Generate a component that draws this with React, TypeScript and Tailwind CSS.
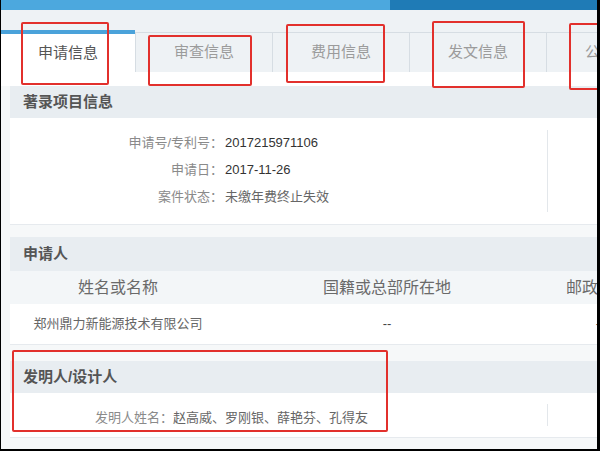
const font = "font-['Liberation_Sans','Noto_Sans_CJK_SC',sans-serif]";

const tabs = ['申请信息', '审查信息', '费用信息', '发文信息', '公布公告'];

const bibRows = [
  { label: '申请号/专利号：', value: '2017215971106', mono: true },
  { label: '申请日：', value: '2017-11-26', mono: true },
  { label: '案件状态：', value: '未缴年费终止失效', mono: false },
];

// red annotation boxes drawn over the screenshot
const marks = [
  'left-[20px] top-[22px] w-[88px] h-[63px]',
  'left-[147px] top-[35px] w-[104px] h-[51px]',
  'left-[285px] top-[24px] w-[99px] h-[59px]',
  'left-[431px] top-[21px] w-[93px] h-[67px]',
  'left-[568px] top-[23px] w-[60px] h-[67px]',
  'left-[11px] top-[350px] w-[376px] h-[82px]',
];

function SectionHeader({ title, h }: { title: string; h: string }) {
  return (
    <div className={`${h} flex items-center pl-[13px] bg-[#e8edf1] text-[15px] font-bold text-[#555]`}>
      {title}
    </div>
  );
}

export default function App() {
  return (
    <div className={`relative w-[600px] h-[451px] overflow-hidden bg-[#f6f8f9] border-l border-r-[3px] border-b-2 border-black ${font}`}>
      {/* top bar */}
      <div className="flex h-[10px]">
        <div className="w-[389px] bg-[#4ca8de]" />
        <div className="flex-1 bg-[#1f7bb6]" />
      </div>
      <div className="h-[20px] bg-[#eef2f5]" />

      {/* tabs */}
      <div className="flex h-[42px] bg-[#eef2f5] w-[700px]">
        {tabs.map((t, i) =>
          i === 0 ? (
            <div
              key={t}
              className="w-[134px] shrink-0 bg-white border-t-[4px] border-[#4aa2da] flex items-center justify-center text-[15px] text-[#555]"
            >
              {t}
            </div>
          ) : (
            <div
              key={t}
              className="w-[137px] shrink-0 mt-[2px] bg-[#eef2f5] border-t border-l border-[#d6dde3] flex items-center justify-center text-[15px] text-[#9b9b9b]"
            >
              {t}
            </div>
          )
        )}
      </div>
      <div className="h-[14px] bg-white" />

      {/* 著录项目信息 */}
      <div className="ml-[9px] w-[620px]">
        <SectionHeader title="著录项目信息" h="h-[32px]" />
        <div className="h-[107px] bg-white border-b border-[#e6eaee] flex">
          <div className="w-[537px] shrink-0 pt-[11px] text-[13px]">
            {bibRows.map((r) => (
              <div key={r.label} className="h-[27px] flex items-center">
                <span className="w-[213px] text-right text-[#8a8a8a]">{r.label}</span>
                <span className={r.mono ? 'pl-[2px] text-[#333]' : 'pl-[2px] text-[#666]'}>{r.value}</span>
              </div>
            ))}
          </div>
          <div className="my-[12px] border-l border-[#e3e7eb]" />
        </div>
      </div>

      <div className="h-[12px]" />

      {/* 申请人 */}
      <div className="ml-[9px] w-[620px]">
        <SectionHeader title="申请人" h="h-[34px]" />
        <div className="h-[33px] flex items-center bg-[#f3f6f8] text-[16px] text-[#6a6a6a] whitespace-nowrap">
          <div className="w-[216px] shrink-0 text-center">姓名或名称</div>
          <div className="w-[322px] shrink-0 text-center">国籍或总部所在地</div>
          <div className="w-[100px] shrink-0 text-center">邮政编码</div>
        </div>
        <div className="h-[41px] flex items-center bg-white border-b border-[#e6eaee] text-[13px] text-[#666] whitespace-nowrap">
          <div className="w-[216px] shrink-0 text-center">郑州鼎力新能源技术有限公司</div>
          <div className="w-[322px] shrink-0 text-center text-[#444]">--</div>
          <div className="w-[100px] shrink-0 text-center text-[#444]">-</div>
        </div>
      </div>

      <div className="h-[16px]" />

      {/* 发明人/设计人 */}
      <div className="ml-[9px] w-[620px]">
        <SectionHeader title="发明人/设计人" h="h-[32px]" />
        <div className="h-[45px] bg-white border-b border-[#e6eaee] flex">
          <div className="w-[537px] shrink-0 flex items-center pt-[5px] pl-[85px] text-[13px]">
            <span className="text-[#8a8a8a]">发明人姓名：</span>
            <span className="text-[#666]">赵高威、罗刚银、薛艳芬、孔得友</span>
          </div>
          <div className="my-[11px] border-l border-[#e3e7eb]" />
        </div>
      </div>

      {/* annotations */}
      {marks.map((m) => (
        <div key={m} className={`absolute ${m} border-2 border-[#e2302c] rounded-[2px]`} />
      ))}
    </div>
  );
}
